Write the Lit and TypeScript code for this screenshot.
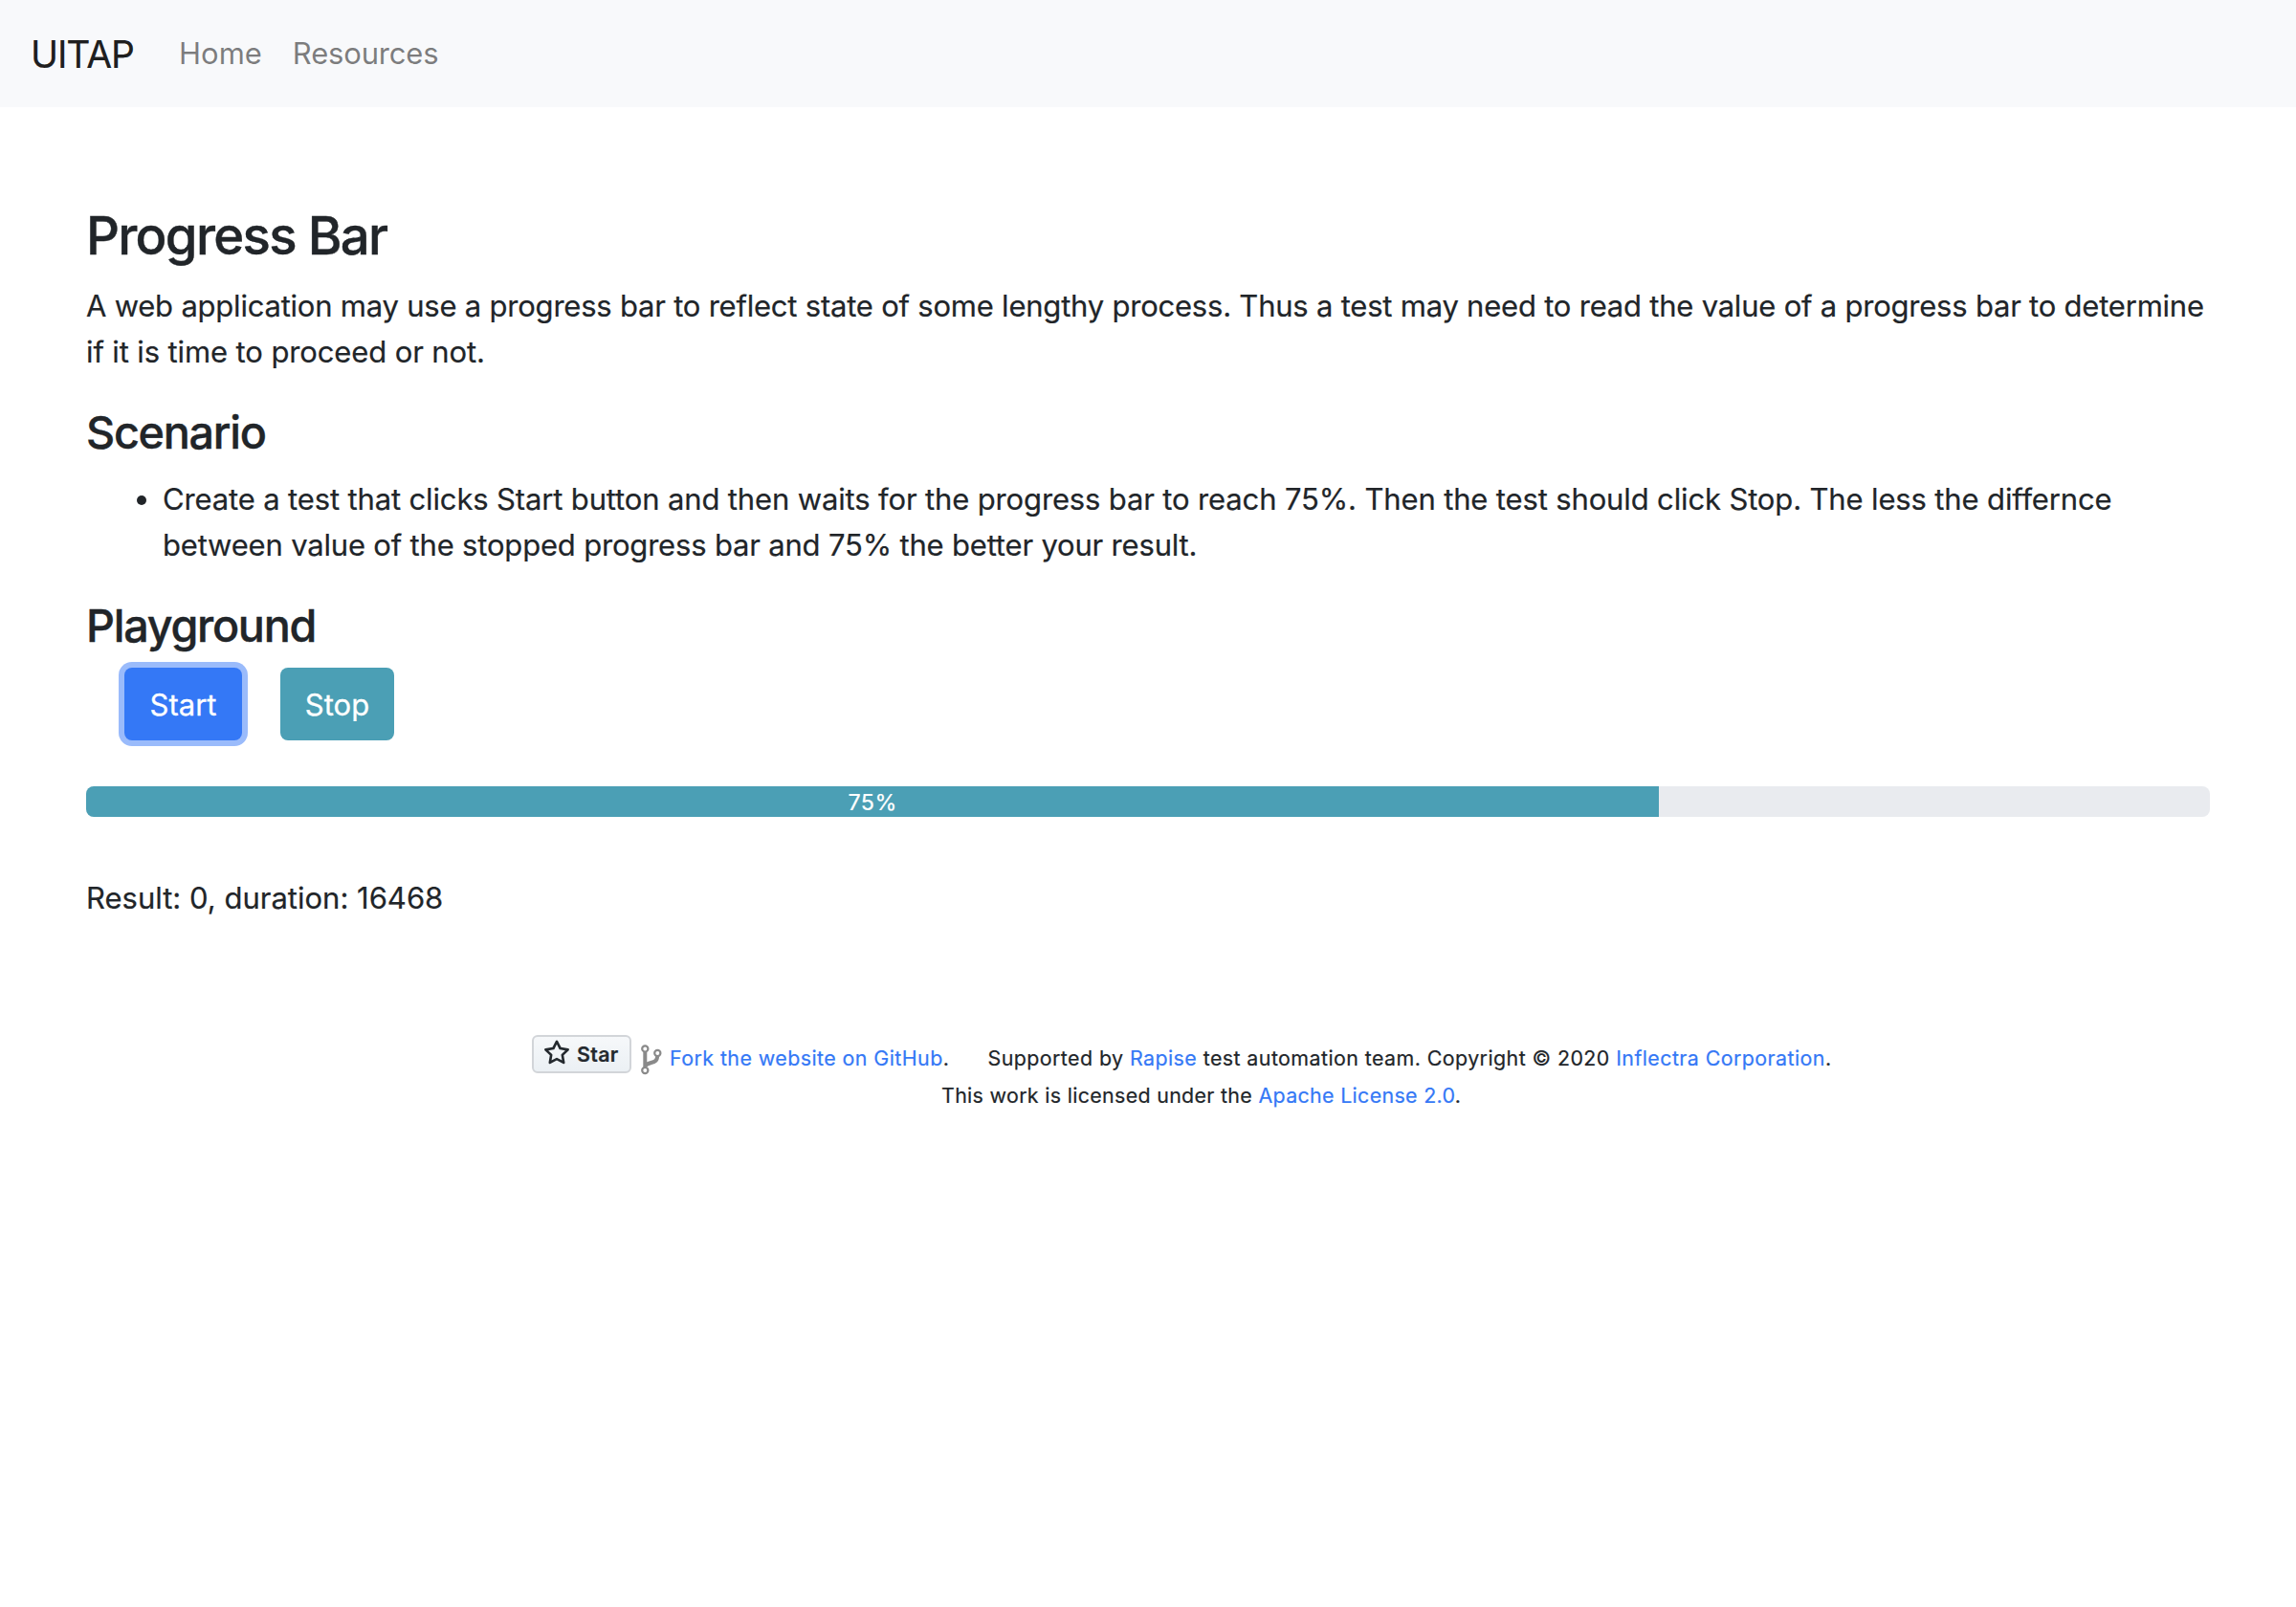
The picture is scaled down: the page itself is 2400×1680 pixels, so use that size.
import { LitElement, html, css, svg } from "lit";
import { customElement, state } from "lit/decorators.js";

const starIcon = html`<svg class="star-icon" viewBox="0 0 16 16" aria-hidden="true">
  ${svg`<path fill="currentColor" fill-rule="evenodd" d="M8 .25a.75.75 0 01.673.418l1.882 3.815 4.21.612a.75.75 0 01.416 1.279l-3.046 2.97.719 4.192a.75.75 0 01-1.088.791L8 12.347l-3.766 1.98a.75.75 0 01-1.088-.79l.72-4.194L.818 6.374a.75.75 0 01.416-1.28l4.21-.611L7.327.668A.75.75 0 018 .25zm0 2.445L6.615 5.5a.75.75 0 01-.564.41l-3.097.45 2.24 2.184a.75.75 0 01.216.664l-.528 3.084 2.769-1.456a.75.75 0 01.698 0l2.77 1.456-.53-3.084a.75.75 0 01.216-.664l2.24-2.183-3.096-.45a.75.75 0 01-.564-.41L8 2.694v.001z"/>`}
</svg>`;

const forkIcon = html`<svg class="fork-icon" viewBox="0 0 22 32" fill="none" stroke="currentColor" aria-hidden="true">
  ${svg`<g stroke-width="2.2">
      <circle cx="4.3" cy="4.4" r="3.1"/>
      <circle cx="17.3" cy="9" r="3.1"/>
      <circle cx="4.3" cy="27" r="3.1"/>
    </g>
    <path stroke-width="4" d="M4.3 8v15.6M17.1 12.2C17.1 20.6 8 17.4 4.4 22.4"/>`}
</svg>`;

@customElement("app-root")
export class AppRoot extends LitElement {
  @state() private value = 75;
  @state() private fill = 74.06;

  static styles = css`
    :host {
      display: block;
      min-height: 1680px;
      background: #fff;
      color: #212529;
      font: 400 31px/48px Inter, "Liberation Sans", sans-serif;
      -webkit-text-stroke: 0.2px currentColor;
    }
    * { box-sizing: border-box; }
    h3, h4, p, ul { margin: 0; padding: 0; }
    a { color: #3478f6; text-decoration: none; }

    .navbar {
      display: flex;
      align-items: center;
      height: 112px;
      padding: 16px 32px;
      background: #f8f9fb;
    }
    .brand {
      width: 107px;
      margin-right: 32px;
      padding-top: 2px;
      color: rgba(0, 0, 0, 0.9);
      font-size: 39px;
      line-height: 60px;
      letter-spacing: -1.066px;
      white-space: nowrap;
    }
    .nav-link {
      padding: 16px;
      color: rgba(0, 0, 0, 0.5);
      letter-spacing: 0;
      -webkit-text-stroke-width: 0;
    }
    .nav-link + .nav-link { letter-spacing: -0.186px; }

    .container { padding: 100.5px 90px 0; }
    h3, h4 {
      font-weight: 500;
      -webkit-text-stroke-width: 0.4px;
    }
    h3 {
      margin-bottom: 16px;
      font-size: 54.5px;
      line-height: 67.2px;
      letter-spacing: -1.7px;
    }
    h4 {
      margin-bottom: 16.5px;
      font-size: 46.7px;
      line-height: 57.6px;
      letter-spacing: -1.27px;
    }
    h4.tight { margin-bottom: 14.9px; }
    .line { display: block; white-space: nowrap; }
    .intro { margin-bottom: 32.4px; letter-spacing: -0.218px; }
    .tail { letter-spacing: -0.119px; }

    .steps { list-style: none; margin-bottom: 31.7px; }
    .step { display: flex; padding-left: 53px; letter-spacing: -0.142px; }
    .step::before {
      content: "";
      flex: none;
      width: 10px;
      height: 10px;
      margin: 20px 17px 0 0;
      border-radius: 50%;
      background: currentColor;
    }
    .step-tail { letter-spacing: -0.185px; }

    .actions { display: flex; gap: 40px; padding-left: 40px; }
    .btn {
      height: 76px;
      padding: 2px 0 0;
      border: 0;
      border-radius: 8px;
      color: #fff;
      font: inherit;
      letter-spacing: 0;
      -webkit-text-stroke: 0.3px currentColor;
    }
    .start { width: 123px; background: #3478f6; box-shadow: 0 0 0 6px #9abbfb; }
    .stop { width: 119px; background: #4b9fb5; }

    .progress {
      display: flex;
      height: 32px;
      margin-top: 48px;
      overflow: hidden;
      border-radius: 8px;
      background: #e9ebef;
    }
    .bar {
      display: flex;
      align-items: center;
      justify-content: center;
      padding-top: 2px;
      background: #4b9fb5;
      color: #fff;
      font-size: 23.3px;
      line-height: 30px;
      letter-spacing: 0.4px;
    }
    .result { margin-top: 60.2px; }

    .footer {
      padding: 119.8px 0 0 556px;
      font-size: 21.4px;
      line-height: 33px;
      letter-spacing: 0.428px;
      white-space: nowrap;
    }
    .footer-row { display: flex; align-items: flex-start; }
    .star-btn {
      display: flex;
      align-items: center;
      width: 104px;
      height: 40px;
      padding: 0 0 2px 10px;
      gap: 7px;
      border: 2px solid #d2d5d9;
      border-radius: 6px;
      background: linear-gradient(#f6f8fa, #ebf0f4);
      color: #24292e;
      font-weight: 600;
      line-height: 32px;
      letter-spacing: 0.3px;
    }
    .star-btn span { padding-top: 2px; }
    .star-icon { width: 28px; height: 28px; flex: none; }
    .fork-icon { width: 22px; height: 32px; margin: 10px 8px 0 10px; color: #8a8a8a; }
    .fork-text { width: 332.5px; padding-top: 8px; }
    .support-text { padding-top: 8px; }
    .license { padding: 5px 0 0 428px; letter-spacing: 0.323px; }
  `;

  render() {
    return html`
      <nav class="navbar">
        <span class="brand">UITAP</span>
        <a class="nav-link">Home</a>
        <a class="nav-link">Resources</a>
      </nav>
      <main class="container">
        <h3>Progress Bar</h3>
        <p class="intro">
          <span class="line">A web application may use a progress bar to reflect state of some lengthy process. Thus a test may need to read the value of a progress bar to determine</span>
          <span class="line tail">if it is time to proceed or not.</span>
        </p>
        <h4>Scenario</h4>
        <ul class="steps">
          <li class="step">
            <div>
              <span class="line">Create a test that clicks Start button and then waits for the progress bar to reach 75%. Then the test should click Stop. The less the differnce</span>
              <span class="line step-tail">between value of the stopped progress bar and 75% the better your result.</span>
            </div>
          </li>
        </ul>
        <h4 class="tight">Playground</h4>
        <div class="actions">
          <button class="btn start">Start</button>
          <button class="btn stop">Stop</button>
        </div>
        <div class="progress">
          <div class="bar" style="width:${this.fill}%">${this.value}%</div>
        </div>
        <p class="result">Result: 0, duration: 16468</p>
      </main>
      <footer class="footer">
        <div class="footer-row">
          <a class="star-btn">${starIcon}<span>Star</span></a>
          ${forkIcon}
          <span class="fork-text"><a>Fork the website on GitHub</a>.</span>
          <span class="support-text">Supported by <a>Rapise</a> test automation team. Copyright © 2020 <a>Inflectra Corporation</a>.</span>
        </div>
        <div class="license">This work is licensed under the <a>Apache License 2.0</a>.</div>
      </footer>
    `;
  }
}
